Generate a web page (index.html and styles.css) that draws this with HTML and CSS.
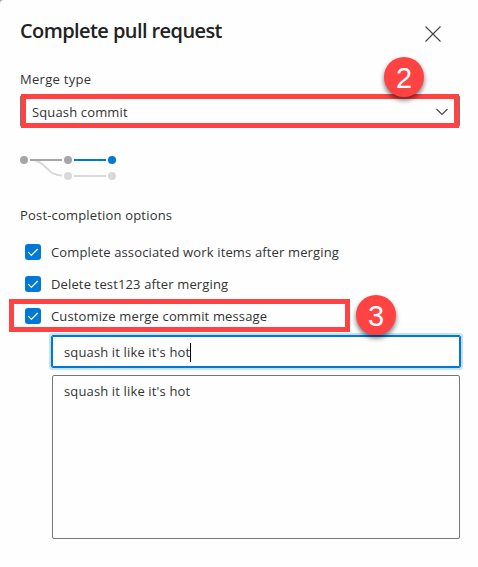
FILE: index.html
```html
<!DOCTYPE html>
<html lang="en">
<head>
<meta charset="utf-8">
<title>Complete pull request</title>
<link rel="stylesheet" href="styles.css">
</head>
<body>
<main class="dialog">
  <header class="header">
    <h1 class="title">Complete pull request</h1>
    <svg class="close" width="16" height="16" viewBox="0 0 16 16"><path d="M.5 .5 15.5 15.5M15.5 .5 .5 15.5"/></svg>
  </header>
  <div class="label merge-label">Merge type</div>
  <div class="select">
    <span class="select-value">Squash commit</span>
    <svg class="chevron" width="12" height="8" viewBox="0 0 12 8"><path d="M.5 1 6 6.5 11.5 1"/></svg>
    <div class="callout callout-select"></div>
    <div class="badge badge-two">2</div>
  </div>
  <svg class="graph" width="98" height="28" viewBox="0 0 98 28">
    <path class="pale" d="M11 7C26 7 26 22.5 42 22.5M54 23H86"/>
    <path class="gray" d="M10 7H42"/>
    <path class="blue" d="M54 7H86"/>
    <circle cx="4" cy="7" r="4" fill="#a6a6a6"/>
    <circle cx="48" cy="7" r="4" fill="#a6a6a6"/>
    <circle cx="92" cy="7" r="4" fill="#0078d7"/>
    <circle cx="48" cy="23" r="4" fill="#d9d9d9"/>
    <circle cx="92" cy="23" r="4" fill="#d9d9d9"/>
  </svg>
  <div class="label options-label">Post-completion options</div>
  <div class="option">
    <svg class="check" width="16" height="16" viewBox="0 0 16 16"><path d="M3.3 8.2 6.4 11.3 12.7 5"/></svg>
    <span>Complete associated work items after merging</span>
  </div>
  <div class="option">
    <svg class="check" width="16" height="16" viewBox="0 0 16 16"><path d="M3.3 8.2 6.4 11.3 12.7 5"/></svg>
    <span>Delete test123 after merging</span>
  </div>
  <div class="option">
    <svg class="check" width="16" height="16" viewBox="0 0 16 16"><path d="M3.3 8.2 6.4 11.3 12.7 5"/></svg>
    <span>Customize merge commit message</span>
    <div class="callout callout-option"></div>
    <div class="badge badge-three">3</div>
  </div>
  <div class="field"><span>squash it like it's hot</span><i class="caret"></i></div>
  <div class="message">squash it like it's hot</div>
</main>
</body>
</html>
```
FILE: styles.css
```css
* { box-sizing: border-box; }
html { background: #aaa; }
body { margin: 0; }
.dialog {
  width: 478px;
  height: 567px;
  padding: 16px 18px 0 20px;
  border-top-left-radius: 4px;
  background: #fefefe;
  color: #333;
  font: 13px/20px "Open Sans", sans-serif;
  letter-spacing: 0.14px;
  white-space: nowrap;
  overflow: hidden;
}
.header { display: flex; justify-content: space-between; height: 53px; padding-right: 19px; }
.title { margin: 0; font-size: 20px; font-weight: 600; line-height: 30px; letter-spacing: -0.58px; color: #222; }
.close { margin-top: 10px; }
.close path, .chevron path { fill: none; stroke: #444; stroke-width: 1.1; }
.label { height: 20px; }
.merge-label { letter-spacing: 0.3px; }
.select {
  position: relative;
  display: flex;
  align-items: center;
  justify-content: space-between;
  width: 440px;
  height: 32px;
  margin-top: 6px;
  padding: 2px 11px 0 11px;
  border: 1px solid #767676;
  border-radius: 2px;
}
.graph { display: block; margin-top: 26px; }
.graph path { fill: none; stroke-width: 2; }
.graph .pale { stroke: #d9d9d9; }
.graph .gray { stroke: #a6a6a6; }
.graph .blue { stroke: #0078d7; }
.options-label { margin: 24px 0 11px; letter-spacing: 0.18px; }
.option { position: relative; display: flex; align-items: center; gap: 10px; height: 32px; padding-left: 5px; }
.check { border-radius: 3px; background: #0078d7; flex: none; }
.check path { fill: none; stroke: #fff; stroke-width: 1.2; }
.field, .message { border-radius: 2px; border: 1px solid #767676; }
.field {
  display: flex;
  align-items: center;
  width: 410px;
  height: 33px;
  margin: 3px 0 0 31px;
  padding: 1px 0 0 12px;
  border-color: #0078d7;
  box-shadow: inset 0 0 0 1px #0078d7, 0 0 0 2px #c7e0f4;
}
.caret { width: 1px; height: 19px; background: #000; }
.message { width: 408px; height: 164px; margin: 7px 0 0 32px; padding: 5px 0 0 11px; }
.callout { position: absolute; border: 5px solid #ff4343; }
.callout-select { left: 0; top: -3px; width: 438px; height: 34px; }
.callout-option { left: -11px; top: -1px; width: 341px; height: 33px; }
.select .callout-select { top: -2px; }
.badge {
  position: absolute;
  width: 40px;
  height: 40px;
  border-radius: 50%;
  background: #ff4343;
  color: #fff;
  font: 29px/42px "Liberation Sans", Arial, sans-serif;
  letter-spacing: 0;
  text-align: center;
  box-shadow: 0 3px 5px rgba(0, 0, 0, .55);
}
.badge-two { left: 363px; top: -39px; }
.badge-three { left: 336px; top: -5px; }
```
